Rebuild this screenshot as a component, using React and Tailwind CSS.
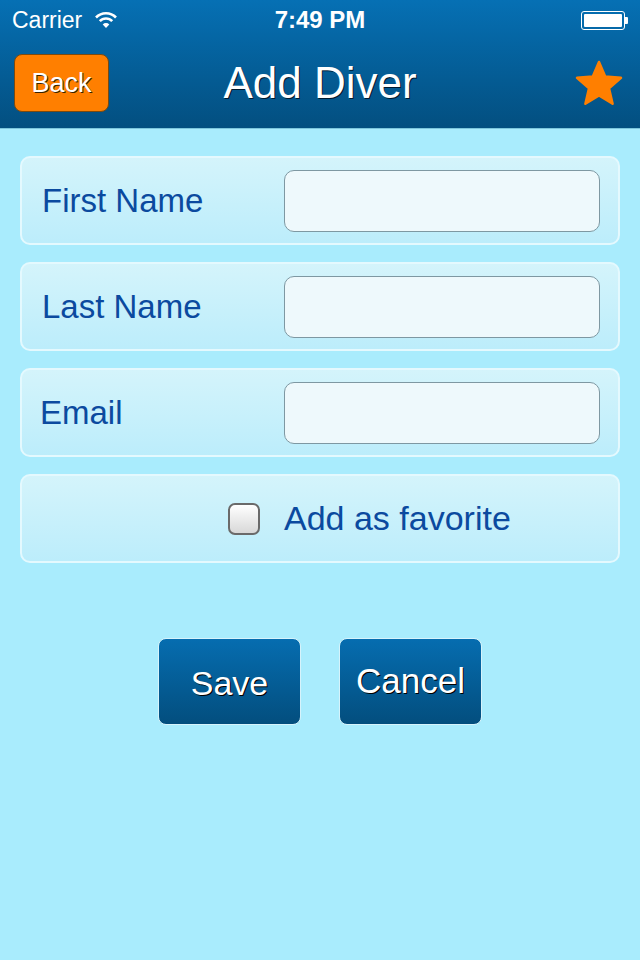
import React from "react";

const font = { fontFamily: '"Liberation Sans", Arial, sans-serif' };

function Field({ label, labelClass = "pl-[20px]" }) {
  return (
    <div className="h-[89px] rounded-[10px] border-2 border-[#e4f9fe] bg-gradient-to-b from-[#d4f4fb] to-[#bcedfb] flex items-center pr-[18px]">
      <div className={`flex-1 text-[33px] text-[#0b4a9f] ${labelClass}`}>{label}</div>
      <div className="w-[316px] h-[62px] rounded-[10px] border border-[#7e98a2] bg-[#eef9fc]" />
    </div>
  );
}

export default function App() {
  return (
    <div className="w-[640px] h-[960px] bg-[#a9ecfd] flex flex-col" style={font}>
      {/* Header */}
      <div className="h-[129px] bg-gradient-to-b from-[#0670b4] to-[#034f80] border-b border-[#7cc6dc] flex flex-col">
        <div className="h-[40px] flex items-center px-[12px] text-white relative">
          <span className="text-[23px]">Carrier</span>
          <svg width="24" height="18" viewBox="0 0 24 18" className="ml-[12px]">
            <path d="M2 6.5 A14 14 0 0 1 22 6.5" stroke="white" strokeWidth="2.6" fill="none" />
            <path d="M5.8 10.2 A8.5 8.5 0 0 1 18.2 10.2" stroke="white" strokeWidth="2.6" fill="none" />
            <path d="M12 17 L8.7 13.5 A4.6 4.6 0 0 1 15.3 13.5 Z" fill="white" />
          </svg>
          <span className="absolute left-0 right-0 text-center text-[24px] font-bold">7:49 PM</span>
          <div className="ml-auto mr-0 flex items-center">
            <div className="w-[44px] h-[19px] rounded-[3px] border border-white p-[2px]">
              <div className="w-full h-full bg-white rounded-[1px]" />
            </div>
            <div className="w-[3px] h-[7px] bg-white rounded-r-[1px]" />
          </div>
        </div>
        <div className="flex-1 flex items-center px-[14px] pb-[2px] relative">
          <div
            className="w-[95px] h-[58px] rounded-[8px] bg-[#ff7f00] border border-[#7a4a10] flex items-center justify-center text-white text-[27px]"
            style={{ textShadow: "1px 1px 0 #3a2200" }}
          >
            Back
          </div>
          <div
            className="absolute left-0 right-0 text-center text-white text-[44px] pointer-events-none"
            style={{ textShadow: "1px 1px 0 #001a30" }}
          >
            Add Diver
          </div>
          <svg width="50" height="48" viewBox="0 0 50 48" className="ml-auto mr-[2px]">
            <path
              d="M25 3 L31.2 17.5 L47 18.8 L35 29.3 L38.6 44.8 L25 36.5 L11.4 44.8 L15 29.3 L3 18.8 L18.8 17.5 Z"
              fill="#ff7f00"
              stroke="#ff7f00"
              strokeWidth="2.5"
              strokeLinejoin="round"
            />
          </svg>
        </div>
      </div>

      {/* Form */}
      <div className="px-[20px] pt-[27px] flex flex-col gap-[17px]">
        <Field label="First Name" />
        <Field label="Last Name" />
        <Field label="Email" labelClass="pl-[18px]" />
        <div className="h-[89px] rounded-[10px] border-2 border-[#e4f9fe] bg-gradient-to-b from-[#d4f4fb] to-[#bcedfb] flex items-center pl-[206px]">
          <div className="w-[32px] h-[32px] rounded-[7px] border-2 border-[#6a6a6a] bg-gradient-to-b from-white to-[#d8d8d8]" />
          <span className="ml-[24px] text-[34px] text-[#0b4a9f]">Add as favorite</span>
        </div>
      </div>

      {/* Buttons */}
      <div className="mt-[75px] flex justify-center gap-[38px]">
        <div
          className="w-[143px] h-[87px] rounded-[8px] bg-gradient-to-b from-[#066db0] to-[#034e7e] border border-[#d6f3fb] flex items-center justify-center text-white text-[34px] pt-[3px]"
          style={{ textShadow: "1px 1px 0 #000" }}
        >
          Save
        </div>
        <div
          className="w-[143px] h-[87px] rounded-[8px] bg-gradient-to-b from-[#066db0] to-[#034e7e] border border-[#d6f3fb] flex items-center justify-center text-white text-[35px]"
          style={{ textShadow: "1px 1px 0 #000" }}
        >
          Cancel
        </div>
      </div>
    </div>
  );
}
